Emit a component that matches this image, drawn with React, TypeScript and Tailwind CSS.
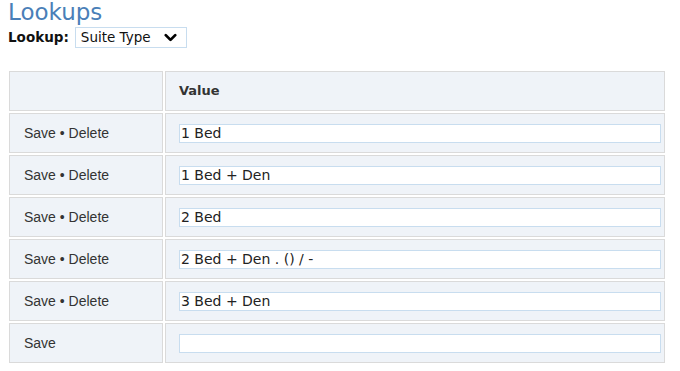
import { ChevronDown } from "lucide-react";

const rows = ["1 Bed", "1 Bed + Den", "2 Bed", "2 Bed + Den . () / -", "3 Bed + Den"];

const cell = "h-10 flex items-center bg-[#eff3f8] border border-[#dadada]";

const ValueInput = ({ value }: { value: string }) => (
  <input
    defaultValue={value}
    className="w-[482px] h-[19px] px-[1px] bg-white border border-[#c8ddef] outline-none text-[14px] text-[#222] font-['DejaVu_Sans',sans-serif]"
  />
);

export default function App() {
  return (
    <div className="px-[8px] pb-2 bg-white min-h-[371px] font-['Liberation_Sans',Arial,sans-serif]">
      <h1 className="text-[23px] leading-[26px] text-[#4a7fb8] font-['DejaVu_Sans',sans-serif] -mt-[1px]">
        Lookups
      </h1>
      <div className="flex items-center gap-[6px] mt-[2px]">
        <span className="text-[13.5px] font-bold text-[#111] font-['DejaVu_Sans',sans-serif]">Lookup:</span>
        <div className="w-[112px] h-[21px] flex items-center justify-between pl-[5px] pr-[6px] border border-[#c8ddef] bg-white">
          <span className="text-[13.5px] text-[#111] font-['DejaVu_Sans',sans-serif]">Suite Type</span>
          <ChevronDown className="w-[19px] h-[19px] text-black" strokeWidth={3.5} />
        </div>
      </div>

      {/* Lookup table */}
      <div className="mt-[23px] ml-[1px] w-[656px] grid grid-cols-[154px_1fr] gap-[2px]">
        <div className={cell} />
        <div className={`${cell} pl-[13px]`}>
          <span className="text-[13px] font-bold text-[#333] font-['DejaVu_Sans',sans-serif]">Value</span>
        </div>
        {rows.map((r) => (
          <>
            <div key={r + "a"} className={`${cell} pl-[14px] text-[14px] text-[#333]`}>
              Save • Delete
            </div>
            <div key={r + "b"} className={`${cell} pl-[13px]`}>
              <ValueInput value={r} />
            </div>
          </>
        ))}
        <div className={`${cell} pl-[14px] text-[14px] text-[#333]`}>Save</div>
        <div className={`${cell} pl-[13px]`}>
          <ValueInput value="" />
        </div>
      </div>
    </div>
  );
}
